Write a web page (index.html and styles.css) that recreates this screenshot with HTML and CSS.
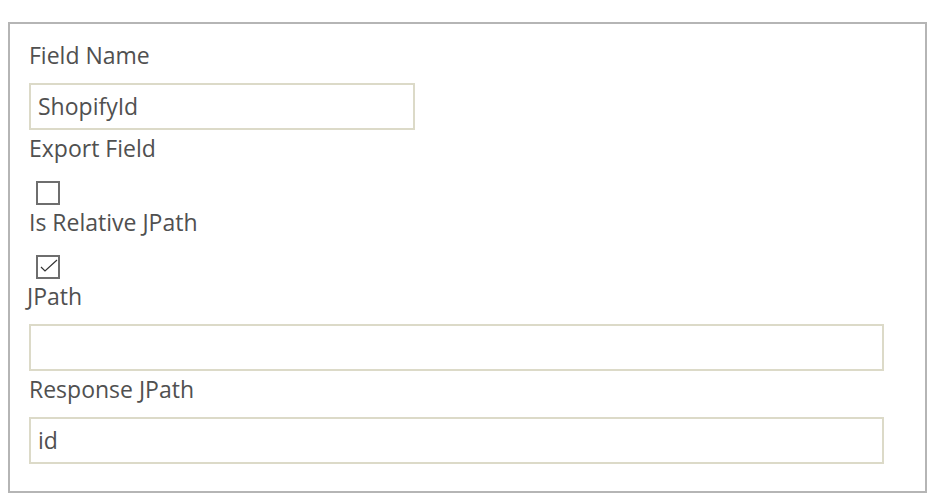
FILE: index.html
```html
<!DOCTYPE html>
<html>
<head>
<meta charset="utf-8">
<link rel="stylesheet" href="styles.css">
</head>
<body>
<div class="panel">
  <div class="field-label">Field Name</div>
  <div class="input input-short">ShopifyId</div>
  <div class="field-label">Export Field</div>
  <span class="checkbox"></span>
  <div class="field-label">Is Relative JPath</div>
  <span class="checkbox checked"><svg width="20" height="20" viewBox="0 0 20 20"><polyline points="3,10 7,14 19,3" fill="none" stroke="#333" stroke-width="1.2"/></svg></span>
  <div class="field-label field-label-shift">JPath</div>
  <div class="input input-wide"></div>
  <div class="field-label">Response JPath</div>
  <div class="input input-wide">id</div>
</div>
</body>
</html>
```
FILE: styles.css
```css
body {
  margin: 8px;
  background: #fff;
  font-family: "Open Sans", "Noto Sans", sans-serif;
  color: #505050;
}
.panel {
  margin-top: 14px;
  width: 896px;
  border: 2px solid #b5b5b5;
  padding: 16px 0 24px 19px;
  display: flex;
  flex-direction: column;
  align-items: flex-start;
  box-sizing: content-box;
}
.field-label {
  font-size: 23px;
  line-height: 30px;
  height: 30px;
  margin-bottom: 12px;
  white-space: nowrap;
}
.field-label-shift {
  margin-left: -2px;
}
.input {
  box-sizing: border-box;
  height: 47px;
  border: 2px solid #dcdac8;
  padding: 0 7px;
  font-size: 23px;
  line-height: 43px;
  color: #505050;
  margin-top: 1px;
  margin-bottom: 3px;
}
.input-short { width: 386px; }
.input-wide { width: 855px; }
.checkbox {
  box-sizing: border-box;
  width: 24px;
  height: 24px;
  border: 2px solid #6e6e6e;
  margin: 6px 0 2px 7px;
  display: flex;
  align-items: center;
  justify-content: center;
  background: #fff;
}
.checked svg {
  display: block;
}
```
